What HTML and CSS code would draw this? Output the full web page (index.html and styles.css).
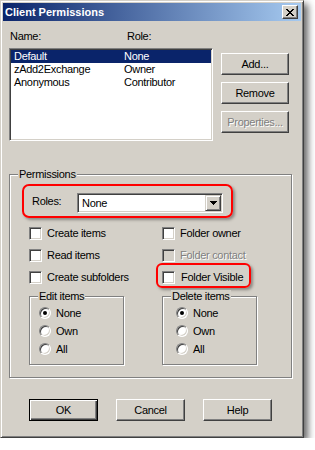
FILE: index.html
```html
<!DOCTYPE html>
<html lang="en">
<head>
    <meta charset="UTF-8">
    <meta name="viewport" content="width=device-width, initial-scale=1.0">
    <title>Client Permissions</title>
    <link rel="stylesheet" href="styles.css">
</head>
<body>

    <div class="window">
        <!-- Title Bar -->
        <div class="titlebar">
            <span class="title">Client Permissions</span>
            <button class="close" aria-label="Close">
                <svg width="8" height="7" viewBox="0 0 8 7" shape-rendering="crispEdges"><path d="M0 0h2v1H0zM6 0h2v1H6zM1 1h2v1H1zM5 1h2v1H5zM2 2h4v1H2zM3 3h2v1H3zM2 4h4v1H2zM1 5h2v1H1zM5 5h2v1H5zM0 6h2v1H0zM6 6h2v1H6z"/></svg>
            </button>
        </div>

        <div class="dialog">
            <!-- Users List -->
            <div class="top">
                <div class="users">
                    <div class="headings">
                        <span class="col-name">Name:</span>
                        <span>Role:</span>
                    </div>
                    <div class="listbox">
                        <div class="row selected"><span class="col-user">Default</span><span>None</span></div>
                        <div class="row"><span class="col-user">zAdd2Exchange</span><span>Owner</span></div>
                        <div class="row"><span class="col-user">Anonymous</span><span>Contributor</span></div>
                    </div>
                </div>
                <div class="side-buttons">
                    <button class="btn">Add...</button>
                    <button class="btn">Remove</button>
                    <button class="btn" disabled>Properties...</button>
                </div>
            </div>

            <!-- Permissions Group -->
            <fieldset class="group permissions">
                <legend>Permissions</legend>

                <div class="callout roles">
                    <span>Roles:</span>
                    <div class="combo">
                        <span class="combo-value">None</span>
                        <span class="combo-arrow">
                            <svg width="7" height="4" viewBox="0 0 7 4" shape-rendering="crispEdges"><path d="M0 0h7v1H0zM1 1h5v1H1zM2 2h3v1H2zM3 3h1v1H3z"/></svg>
                        </span>
                    </div>
                </div>

                <div class="checks">
                    <label class="check"><span class="box"></span>Create items</label>
                    <label class="check right"><span class="box"></span>Folder owner</label>
                    <label class="check"><span class="box"></span>Read items</label>
                    <label class="check right disabled"><span class="box"></span>Folder contact</label>
                    <label class="check"><span class="box"></span>Create subfolders</label>
                    <label class="check right flagged"><span class="box"></span>Folder Visible</label>
                </div>

                <div class="subgroups">
                    <fieldset class="group small edit">
                        <legend>Edit items</legend>
                        <label class="option"><span class="radio checked"></span>None</label>
                        <label class="option"><span class="radio"></span>Own</label>
                        <label class="option"><span class="radio"></span>All</label>
                    </fieldset>
                    <fieldset class="group small delete">
                        <legend>Delete items</legend>
                        <label class="option"><span class="radio checked"></span>None</label>
                        <label class="option"><span class="radio"></span>Own</label>
                        <label class="option"><span class="radio"></span>All</label>
                    </fieldset>
                </div>
            </fieldset>

            <!-- Dialog Buttons -->
            <div class="footer">
                <button class="btn default">OK</button>
                <button class="btn">Cancel</button>
                <button class="btn">Help</button>
            </div>
        </div>
    </div>

</body>
</html>
```

FILE: styles.css
```css
* {
    margin: 0;
    padding: 0;
    box-sizing: border-box;
}

body {
    font-family: "Liberation Sans", Arial, sans-serif;
    font-size: 11px;
    line-height: 13px;
    letter-spacing: -0.3px;
    color: #000;
    background: #fff;
}

.window {
    width: 304px;
    height: 438px;
    padding: 2px;
    background: #d4d0c8;
    border: 1px solid;
    border-color: #d4d0c8 #404040 #404040 #d4d0c8;
    box-shadow: inset 1px 1px #fff, inset -1px -1px #808080, 4px 4px 7px rgba(0, 0, 0, 0.6);
}

/* Title bar */
.titlebar {
    height: 18px;
    display: flex;
    align-items: center;
    padding: 0 3px 0 2px;
    background: linear-gradient(to right, #0a246a, #a6caf0);
}

.title {
    color: #fff;
    font-weight: bold;
    letter-spacing: 0;
}

.close {
    margin-left: auto;
    width: 16px;
    height: 14px;
    display: flex;
    align-items: center;
    justify-content: center;
    background: #d4d0c8;
    border: 1px solid;
    border-color: #fff #404040 #404040 #fff;
    box-shadow: inset -1px -1px #808080;
}

/* Buttons */
.btn {
    height: 22px;
    font: inherit;
    letter-spacing: inherit;
    color: #000;
    background: #d4d0c8;
    border: 1px solid;
    border-color: #fff #404040 #404040 #fff;
    box-shadow: inset -1px -1px #808080;
}

.btn:disabled {
    color: #808080;
    text-shadow: 1px 1px #fff;
}

.btn.default {
    border-color: #000;
    box-shadow: inset 1px 1px #fff, inset -1px -1px #404040, inset -2px -2px #808080;
}

/* Users list */
.dialog {
    padding: 9px 0 0 6px;
}

.top {
    display: flex;
}

.users {
    width: 204px;
}

.headings {
    display: flex;
    height: 13px;
    padding-left: 1px;
}

.col-name {
    width: 117px;
}

.listbox {
    margin-top: 5px;
    height: 93px;
    padding: 1px;
    background: #fff;
    border: 1px solid;
    border-color: #808080 #fff #fff #808080;
    box-shadow: inset 1px 1px #404040, inset -1px -1px #d4d0c8;
}

.row {
    display: flex;
    height: 13px;
    padding-left: 3px;
    white-space: nowrap;
}

.row.selected {
    background: #0a246a;
    color: #fff;
}

.col-user {
    width: 110px;
}

.side-buttons {
    display: flex;
    flex-direction: column;
    gap: 7px;
    margin: 23px 0 0 8px;
}

.side-buttons .btn {
    width: 68px;
}

/* Group boxes */
.group {
    min-width: 0;
    border: 1px solid #808080;
    box-shadow: 1px 1px 0 #fff, inset 1px 1px 0 #fff;
}

.group legend {
    margin-left: 8px;
    padding: 0 1px;
    line-height: 13px;
    background: #d4d0c8;
}

.permissions {
    width: 283px;
    margin-top: 27px;
    padding: 0 0 12px 0;
}

/* Red highlight callouts */
.callout {
    border: 2px solid #ff0000;
    border-radius: 7px;
    box-shadow: 2px 2px 3px rgba(0, 0, 0, 0.35);
}

.roles {
    width: 211px;
    height: 34px;
    margin: 3px 0 0 12px;
    padding: 0 8px;
    display: flex;
    align-items: center;
    justify-content: space-between;
}

.combo {
    width: 146px;
    height: 20px;
    margin-top: 4px;
    padding: 1px;
    display: flex;
    align-items: center;
    background: #fff;
    border: 1px solid;
    border-color: #808080 #fff #fff #808080;
    box-shadow: inset 1px 1px #404040, inset -1px -1px #d4d0c8;
}

.combo-value {
    flex: 1;
    padding-left: 3px;
}

.combo-arrow {
    width: 16px;
    height: 16px;
    display: flex;
    align-items: center;
    justify-content: center;
    background: #d4d0c8;
    border: 1px solid;
    border-color: #d4d0c8 #404040 #404040 #d4d0c8;
    box-shadow: inset 1px 1px #fff, inset -1px -1px #808080;
}

/* Checkboxes */
.checks {
    display: grid;
    grid-template-columns: 127px auto;
    margin-top: 4px;
    padding-left: 19px;
}

.check {
    display: flex;
    align-items: center;
    height: 22px;
    white-space: nowrap;
}

.check.right {
    padding-left: 6px;
}

.box {
    width: 13px;
    height: 13px;
    margin-right: 5px;
    flex-shrink: 0;
    background: #fff;
    border: 1px solid;
    border-color: #808080 #fff #fff #808080;
    box-shadow: inset 1px 1px #404040, inset -1px -1px #d4d0c8;
}

.check.disabled {
    color: #808080;
    text-shadow: 1px 1px #fff;
}

.check.disabled .box {
    background: #d4d0c8;
}

.check.flagged {
    justify-self: start;
    height: 25px;
    margin-top: -3px;
    padding: 3px 6px 0 4px;
    border: 2px solid #ff0000;
    border-radius: 6px;
    box-shadow: 2px 2px 3px rgba(0, 0, 0, 0.35);
}

.check.flagged .box {
    margin-right: 6px;
}

/* Radio groups */
.subgroups {
    display: flex;
    gap: 38px;
    margin-top: 2px;
    padding-left: 19px;
}

.small {
    width: 95px;
    padding: 1px 0 6px 9px;
}

.small legend {
    margin-left: -1px;
}

.small.delete {
    padding-left: 13px;
}

.small.delete legend {
    margin-left: -5px;
}

.option {
    display: flex;
    align-items: center;
    height: 18px;
}

.radio {
    width: 12px;
    height: 12px;
    margin-right: 5px;
    display: flex;
    align-items: center;
    justify-content: center;
    border-radius: 50%;
    background: #fff;
    border: 1px solid;
    border-color: #808080 #fff #fff #808080;
    box-shadow: inset 1px 1px #404040, inset -1px -1px #d4d0c8;
}

.radio.checked::after {
    content: "";
    width: 4px;
    height: 4px;
    border-radius: 50%;
    background: #000;
}

/* Footer */
.footer {
    display: flex;
    gap: 18px;
    margin-top: 21px;
    padding-left: 20px;
}

.footer .btn {
    width: 69px;
}
```
